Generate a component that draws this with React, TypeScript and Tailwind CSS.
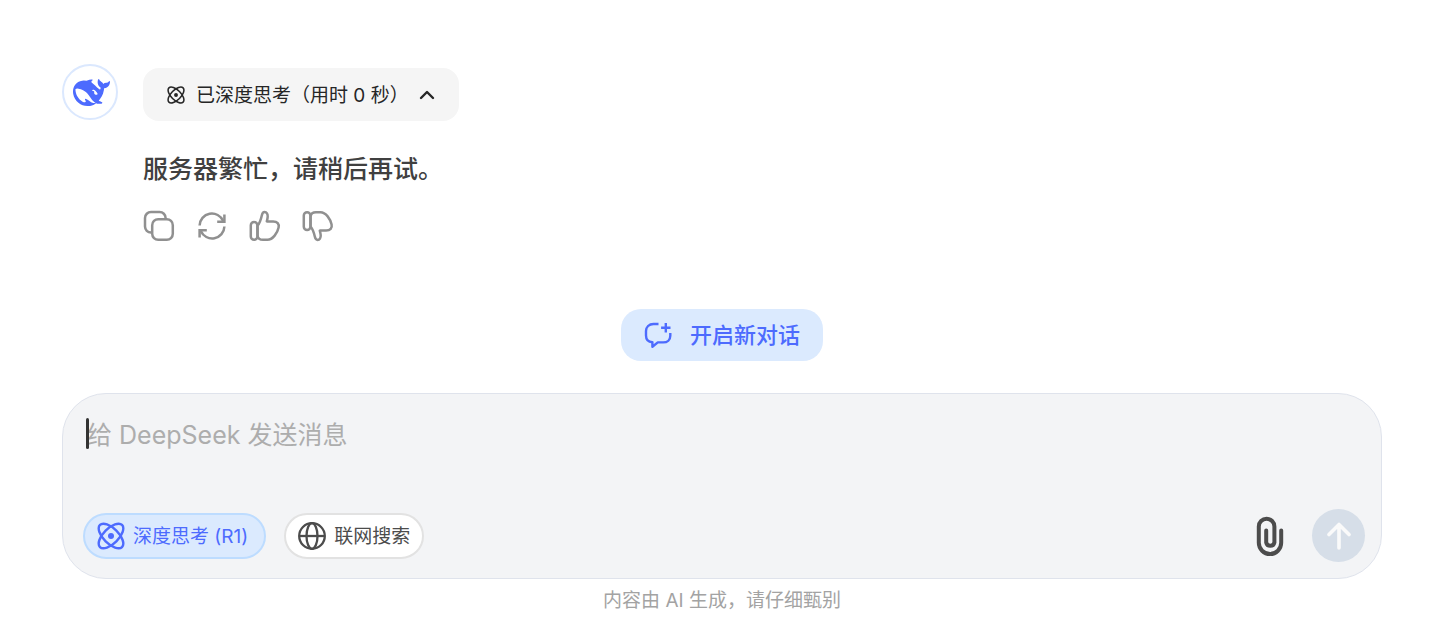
import { useState } from 'react';
import type { ReactNode } from 'react';

type IconProps = { className?: string };

function WhaleLogo({ className }: IconProps) {
  return (
    <svg viewBox="0 0 24 24" fill="currentColor" fillRule="evenodd" className={className} aria-hidden="true">
      <path d="M23.748 4.651c-.254-.124-.364.113-.512.233-.051.04-.094.09-.137.137-.372.397-.806.657-1.373.626-.829-.046-1.537.214-2.163.848-.133-.782-.575-1.248-1.247-1.548-.352-.155-.708-.311-.955-.65-.172-.24-.219-.509-.305-.774-.055-.16-.11-.323-.293-.35-.2-.031-.278.136-.356.276-.313.572-.434 1.202-.422 1.84.027 1.436.633 2.58 1.838 3.393.137.094.172.187.129.323-.082.28-.18.553-.266.833-.055.179-.137.218-.328.14a5.5 5.5 0 0 1-1.737-1.179c-.857-.828-1.631-1.743-2.597-2.46a12 12 0 0 0-.689-.47c-.985-.957.13-1.743.387-1.836.27-.098.094-.433-.778-.428-.872.003-1.67.295-2.687.685a3 3 0 0 1-.465.136 9.6 9.6 0 0 0-2.883-.101c-1.885.21-3.39 1.1-4.497 2.623C.082 8.776-.231 10.854.152 13.02c.403 2.284 1.568 4.175 3.36 5.653 1.857 1.533 3.997 2.284 6.438 2.14 1.482-.085 3.132-.284 4.994-1.86.47.234.962.328 1.78.398.629.058 1.235-.031 1.705-.129.735-.155.684-.836.418-.961-2.155-1.004-1.682-.595-2.112-.926 1.095-1.295 2.768-3.598 3.284-6.733.05-.346.115-.834.108-1.114-.004-.171.035-.238.23-.257a4.2 4.2 0 0 0 1.545-.475c1.397-.763 1.96-2.015 2.093-3.517.02-.23-.004-.467-.247-.588zM11.58 18.167c-2.088-1.642-3.101-2.183-3.52-2.16-.39.024-.32.471-.234.763.09.288.207.487.371.74.114.167.192.416-.113.603-.673.416-1.842-.14-1.897-.168-1.361-.801-2.5-1.86-3.301-3.306-.775-1.393-1.225-2.888-1.299-4.482-.02-.385.094-.522.477-.592a4.7 4.7 0 0 1 1.53-.038c2.131.311 3.946 1.264 5.467 2.774.868.86 1.525 1.887 2.202 2.89.72 1.066 1.494 2.082 2.48 2.915.348.291.626.513.892.677-.802.09-2.14.109-3.055-.615zm4.111-4.844c-.2.081-.4.151-.591.16a1.25 1.25 0 0 1-.798-.254c-.274-.23-.47-.358-.551-.758a1.7 1.7 0 0 1 .015-.588c.07-.327-.007-.537-.238-.727-.188-.156-.426-.199-.689-.199a.6.6 0 0 1-.254-.078.253.253 0 0 1-.114-.358 1 1 0 0 1 .192-.21c.356-.202.767-.136 1.146.016.352.144.618.408 1.001.782.392.451.462.576.685.915.176.264.336.536.446.848.066.194-.02.353-.25.45z" />
    </svg>
  );
}

function AtomIcon({ className }: IconProps) {
  return (
    <svg viewBox="0 0 28 28" fill="none" stroke="currentColor" strokeWidth="2.4" className={className} aria-hidden="true">
      <ellipse cx="14" cy="14" rx="15.6" ry="7.6" transform="rotate(45 14 14)" />
      <ellipse cx="14" cy="14" rx="15.6" ry="7.6" transform="rotate(-45 14 14)" />
      <circle cx="14" cy="14" r="3" fill="currentColor" stroke="none" />
    </svg>
  );
}

function CopyIcon() {
  return (
    <svg viewBox="0 0 32 32" fill="none" stroke="currentColor" strokeWidth="2.5" className="size-8" aria-hidden="true">
      <rect x="9.2" y="9.2" width="20.6" height="20.6" rx="6" />
      <path d="M9 22.6H8a6 6 0 0 1-6-6V8a6 6 0 0 1 6-6h8.6a6 6 0 0 1 6 6v1" />
    </svg>
  );
}

function RefreshIcon() {
  return (
    <svg viewBox="0 0 32 32" fill="none" stroke="currentColor" strokeWidth="2.5" className="size-8" aria-hidden="true">
      <path d="M3.6 15.5A12.3 12.3 0 0 1 27.2 11" />
      <path d="M28.4 4.5v7.2h-7.2" />
      <path d="M28.4 16.5A12.3 12.3 0 0 1 4.8 21" />
      <path d="M3.6 27.5v-7.2h7.2" />
    </svg>
  );
}

function ThumbUpIcon() {
  return (
    <svg viewBox="0 0 32 32" fill="none" stroke="currentColor" strokeWidth="2.5" strokeLinejoin="round" className="size-8" aria-hidden="true">
      <rect x="1.8" y="12" width="6.6" height="17.8" rx="3.3" />
      <path d="M8.6 15.5C11.2 12.5 12 9 12.8 5.4 13.300 3.200 14.200 2 15.600 2c2.100 0 3.200 2 3.100 4.600-.1 1.700-.5 3.300-.9 4.800h6.300c4.200 0 6.300 2.400 5.500 6-1.200 5.400-5.600 12.400-11.200 12.400h-4.400c-3 0-5.400-1.500-5.400-4.600z" />
    </svg>
  );
}

function PlusBubbleIcon() {
  return (
    <svg viewBox="0 0 28 28" fill="none" stroke="currentColor" strokeWidth="2.4" strokeLinejoin="round" className="size-7" aria-hidden="true">
      <path d="M14.5 3H9.5C5 3 2 6 2 10v4.500c0 4 2.600 6.500 6.400 6.700v4.600l5.400-4.400h5.400c4.200 0 7.100-2.700 7.100-6.700v-2.600" />
      <path d="M21.800 2v9.400M17.100 6.700h9.400" />
    </svg>
  );
}

function GlobeIcon() {
  return (
    <svg viewBox="0 0 28 28" fill="none" stroke="currentColor" strokeWidth="2.3" className="size-7" aria-hidden="true">
      <circle cx="14" cy="14" r="12.8" />
      <ellipse cx="14" cy="14" rx="5.5" ry="12.8" />
      <path d="M1.200 14h25.600" />
    </svg>
  );
}

function ClipIcon() {
  return (
    <svg viewBox="0 0 28 40" fill="none" stroke="currentColor" strokeWidth="4" strokeLinecap="round" className="h-10 w-7" aria-hidden="true">
      <path d="M25.200 14.500v12.300a11.200 11.200 0 0 1-22.400 0V10.500a7.800 7.800 0 0 1 15.600 0v16a4.200 4.200 0 0 1-8.200 0V14.500" />
    </svg>
  );
}

function ActionButton({ label, children }: { label: string; children: ReactNode }) {
  return (
    <button type="button" aria-label={label} className="text-[#909090] hover:text-[#555]">
      {children}
    </button>
  );
}

export default function App() {
  const [message, setMessage] = useState('');
  const [deepThink, setDeepThink] = useState(true);
  const [search, setSearch] = useState(false);
  const [open, setOpen] = useState(true);

  return (
    <main className="min-h-screen bg-white pt-16 pr-[58px] pl-[62px] font-['Inter','Noto_Sans_CJK_SC',sans-serif] text-[#404040]">
      {/* Assistant reply */}
      <section className="flex items-start gap-[25px]">
        <div className="flex size-14 shrink-0 items-center justify-center rounded-full border-2 border-[#dbe8fe] pl-0.5 text-[#4d6bfe]">
          <WhaleLogo className="size-[37px]" />
        </div>
        <div className="flex flex-col items-start pt-1">
          <button
            type="button"
            aria-expanded={open}
            onClick={() => setOpen(!open)}
            className="flex h-[53px] items-center rounded-2xl bg-[#f5f5f5] px-6 text-[19px] text-[#262626]"
          >
            <AtomIcon className="mr-[11px] size-[18px]" />
            <span className="pt-1">已深度思考（用时 0 秒）</span>
            <svg viewBox="0 0 16 16" fill="none" stroke="currentColor" strokeWidth="2.4" strokeLinecap="round" strokeLinejoin="round" className={open ? 'ml-2.5 size-4' : 'ml-2.5 size-4 rotate-180'} aria-hidden="true">
              <path d="M2 11l6-6 6 6" />
            </svg>
          </button>
          <p className="mt-7 text-[25px] leading-10 font-medium">服务器繁忙，请稍后再试。</p>
          <div className="mt-[21px] flex gap-[21px]">
            <ActionButton label="复制">
              <CopyIcon />
            </ActionButton>
            <ActionButton label="重新生成">
              <RefreshIcon />
            </ActionButton>
            <ActionButton label="喜欢">
              <ThumbUpIcon />
            </ActionButton>
            <ActionButton label="不喜欢">
              <span className="block -scale-y-100">
                <ThumbUpIcon />
              </span>
            </ActionButton>
          </div>
        </div>
      </section>

      {/* New chat */}
      <div className="mt-[67px] flex justify-center">
        <button type="button" className="flex h-[52px] items-center gap-[18px] rounded-[20px] bg-[#dbeafe] px-[23px] text-[22px] font-medium text-[#4d6bfe]">
          <PlusBubbleIcon />
          开启新对话
        </button>
      </div>

      {/* Message box */}
      <form
        onSubmit={(e) => e.preventDefault()}
        className="mt-8 rounded-[44px] border border-[#dfe3ec] bg-[#f3f4f6] pt-5 pr-4 pb-4 pl-5"
      >
        <div className="relative pl-1">
          <textarea
            aria-label="给 DeepSeek 发送消息"
            placeholder="给 DeepSeek 发送消息"
            value={message}
            onChange={(e) => setMessage(e.target.value)}
            className="block h-[95px] w-full resize-none bg-transparent text-[25px] leading-[42px] outline-none placeholder:text-[#adadad]"
          />
          {message === '' && <span className="absolute top-1 left-[3px] h-[31px] w-[3px] rounded-full bg-[#333]" />}
        </div>
        <div className="flex items-center gap-[18px]">
          <button
            type="button"
            aria-pressed={deepThink}
            onClick={() => setDeepThink(!deepThink)}
            className={
              deepThink
                ? 'flex h-[46px] items-center gap-2 rounded-full border-2 border-[#bddcff] bg-[#dbeafe] pr-4 pl-3 text-[19px] text-[#4d6bfe]'
                : 'flex h-[46px] items-center gap-2 rounded-full border-2 border-[#e2e2e2] bg-white pr-4 pl-3 text-[19px] text-[#4c4c4c]'
            }
          >
            <AtomIcon className="size-7" />
            <span className="pt-1">深度思考 (R1)</span>
          </button>
          <button
            type="button"
            aria-pressed={search}
            onClick={() => setSearch(!search)}
            className={
              search
                ? 'flex h-[46px] items-center gap-2 rounded-full border-2 border-[#bddcff] bg-[#dbeafe] px-3 text-[19px] text-[#4d6bfe]'
                : 'flex h-[46px] items-center gap-2 rounded-full border-2 border-[#e2e2e2] bg-white px-3 text-[19px] text-[#4c4c4c]'
            }
          >
            <GlobeIcon />
            <span className="pt-1">联网搜索</span>
          </button>
          <div className="ml-auto flex items-center gap-7">
            <button type="button" aria-label="上传附件" className="text-[#4c4c4c]">
              <ClipIcon />
            </button>
            <button type="submit" aria-label="发送" className="flex size-[53px] items-center justify-center rounded-full bg-[#d6dee8] text-[#fafafa]">
              <svg viewBox="0 0 28 28" fill="none" stroke="currentColor" strokeWidth="3.6" strokeLinecap="round" strokeLinejoin="round" className="size-7" aria-hidden="true">
                <path d="M14 26V2.5M4 12.5l10-10 10 10" />
              </svg>
            </button>
          </div>
        </div>
      </form>

      <p className="mt-1 text-center text-[19px] leading-9 text-[#a3a3a3]">内容由 AI 生成，请仔细甄别</p>
    </main>
  );
}
